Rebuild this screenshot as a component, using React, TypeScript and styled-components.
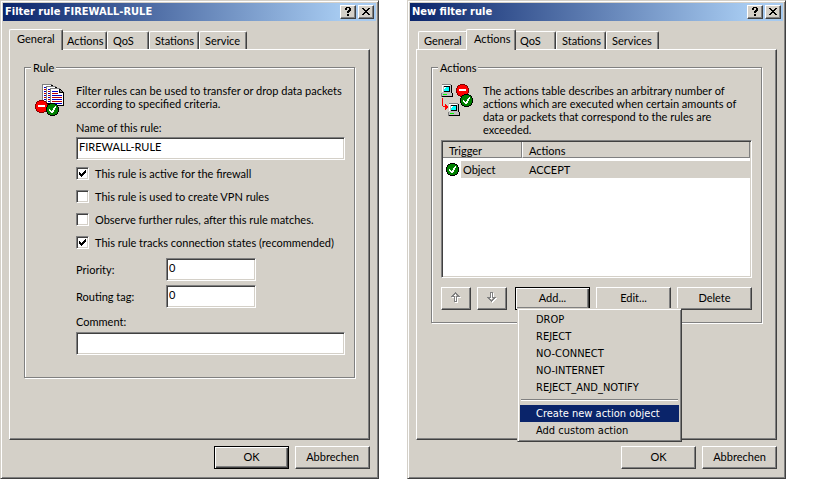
import React, { useId } from "react";
import styled, { createGlobalStyle, css } from "styled-components";

const face = "#d4d0c8";
const shadow = "#808080";
const dark = "#404040";
const uiFont = 'Lato, "Liberation Sans", Arial, sans-serif';
const menuFont = '"DejaVu Sans Condensed", Tahoma, sans-serif';

const GlobalStyle = createGlobalStyle`
  *, *::before, *::after { box-sizing: border-box; }
  body {
    margin: 0;
    background: #fff;
    color: #000;
    font: 11px/13px ${uiFont};
  }
  button, input { font: inherit; color: inherit; margin: 0; border-radius: 0; }
`;

const raised = css`
  border: 1px solid;
  border-color: #fff ${dark} ${dark} #fff;
  box-shadow: inset -1px -1px 0 ${shadow};
`;

const sunken = css`
  border: 1px solid;
  border-color: ${shadow} #fff #fff ${shadow};
  box-shadow: inset 1px 1px 0 ${dark}, inset -1px -1px 0 ${face};
`;

const Desktop = styled.main`
  display: grid;
  grid-template-columns: 1fr 1fr;
  column-gap: 28px;
  min-height: 100vh;
  padding-right: 45px;
`;

const Dialog = styled.section`
  display: flex;
  flex-direction: column;
  min-width: 0;
  padding: 2px;
  background: ${face};
  border: 1px solid;
  border-color: ${face} ${dark} ${dark} ${face};
  box-shadow: inset 1px 1px 0 #fff, inset -1px -1px 0 ${shadow};
`;

const TitleBar = styled.header`
  display: flex;
  align-items: center;
  gap: 2px;
  height: 18px;
  padding: 0 2px;
  background: linear-gradient(to right, #0a246a, #a6caf0 calc(100% - 36px));
`;

const Title = styled.h1`
  flex: 1;
  margin: 0;
  color: #fff;
  font: bold 11px/18px ${menuFont};
`;

const CaptionButton = styled.button`
  ${raised}
  display: grid;
  place-items: center;
  width: 16px;
  height: 14px;
  padding: 0 1px 1px 0;
  background: ${face};
`;

const Body = styled.div`
  display: flex;
  flex: 1;
  flex-direction: column;
  padding: 8px 6px 7px;
`;

const TabList = styled.div`
  display: flex;
  align-items: flex-end;
  height: 20px;
  padding: 0 2px;
`;

const Tab = styled.button<{ $width: number; $selected: boolean }>`
  ${raised}
  position: relative;
  width: ${(p) => p.$width}px;
  height: 18px;
  padding: 0 0 0 5px;
  background: ${face};
  border-bottom: 0;
  border-radius: 2px 2px 0 0;
  box-shadow: inset -1px 0 0 ${shadow};
  text-align: left;
  white-space: nowrap;
  ${(p) =>
    p.$selected &&
    css`
      z-index: 1;
      width: ${p.$width + 4}px;
      height: 21px;
      margin: 0 -2px -1px;
      padding: 0 0 3px 7px;
    `}
`;

const Panel = styled.div`
  ${raised}
  flex: 1;
  padding: 11px 14px 0;
`;

const Group = styled.fieldset`
  min-width: 0;
  margin: 0;
  padding: 10px 9px 0;
  border: 1px solid ${shadow};
  box-shadow: 1px 1px 0 #fff, inset 1px 1px 0 #fff;
`;

const Legend = styled.legend`
  padding: 0 2px;
  margin-left: -3px;
  background: ${face};
`;

const Intro = styled.div`
  display: grid;
  grid-template-columns: 32px 1fr;
  column-gap: 10px;
`;

const IntroText = styled.p`
  margin: 0;
`;

const Form = styled.div`
  display: flex;
  flex-direction: column;
  padding: 5px 0 22px 42px;
`;

const TextInput = styled.input`
  ${sunken}
  width: 100%;
  height: 23px;
  padding: 0 2px 4px;
  background: #fff;
`;

const FieldLabel = styled.label`
  margin-bottom: 3px;
`;

const Checks = styled.div`
  display: grid;
  row-gap: 10px;
  padding: 7px 0 9px;
`;

const CheckLabel = styled.label`
  display: flex;
  align-items: center;
  gap: 6px;
  white-space: nowrap;
`;

const CheckFrame = styled.span`
  display: grid;
  width: 13px;
  height: 13px;
  & > * { grid-area: 1 / 1; }
  input:not(:checked) + svg { display: none; }
`;

const CheckBox = styled.input`
  ${sunken}
  appearance: none;
  width: 13px;
  height: 13px;
  background: #fff;
`;

const ValueRow = styled.div`
  display: grid;
  grid-template-columns: 90px 90px;
  align-items: center;
  margin-bottom: 4px;
`;

const CommentField = styled.div`
  display: grid;
  row-gap: 4px;
  padding-top: 3px;
`;

const Footer = styled.footer`
  display: flex;
  justify-content: flex-end;
  gap: 6px;
  padding-top: 6px;
`;

const PushButton = styled.button<{ $default?: boolean }>`
  ${raised}
  flex: none;
  width: 75px;
  height: 23px;
  padding: 0 0 2px;
  background: ${face};
  ${(p) =>
    p.$default &&
    css`
      border-color: #000;
      box-shadow: inset 1px 1px 0 #fff, inset -1px -1px 0 ${dark}, inset -2px -2px 0 ${shadow};
    `}
`;

const ArrowButton = styled(PushButton)`
  display: grid;
  place-items: center;
  width: 30px;
`;

const ListBox = styled.div`
  ${sunken}
  height: 138px;
  margin-top: 4px;
  padding: 1px;
  background: #fff;
`;

const ListTable = styled.table`
  width: 100%;
  table-layout: fixed;
  border-collapse: separate;
  border-spacing: 0;
  tbody::before {
    content: "";
    display: block;
    height: 3px;
  }
`;

const HeadCell = styled.th<{ $first?: boolean }>`
  width: ${(p) => (p.$first ? "79px" : "auto")};
  height: 16px;
  padding: 2px 0 0 6px;
  border-right: 1px solid ${shadow};
  border-bottom: 1px solid ${shadow};
  border-left: ${(p) => (p.$first ? "0" : "1px solid #fff")};
  background: ${face};
  font-weight: normal;
  line-height: 13px;
  text-align: left;
`;

const Cell = styled.td`
  height: 17px;
  padding: 0;
`;

const CellContent = styled.div`
  display: flex;
  align-items: center;
`;

const CellText = styled.span<{ $indent: number }>`
  flex: 1;
  padding-left: ${(p) => p.$indent}px;
  background: ${face};
  line-height: 17px;
`;

const IconSlot = styled.span`
  display: flex;
  width: 18px;
  padding-left: 3px;
`;

const Actions = styled.div`
  display: flex;
  gap: 6px;
  padding: 9px 0 12px;
`;

const ArrowPair = styled.div`
  display: flex;
  flex: 1;
  gap: 6px;
`;

const MenuAnchor = styled.div`
  position: relative;
`;

const Menu = styled.div`
  position: absolute;
  z-index: 2;
  top: 21px;
  left: 2px;
  width: 165px;
  padding: 2px;
  background: ${face};
  border: 1px solid;
  border-color: ${face} ${dark} ${dark} ${face};
  box-shadow: inset 1px 1px 0 #fff, inset -1px -1px 0 ${shadow};
  font: 11px/17px ${menuFont};
`;

const MenuItem = styled.button<{ $active?: boolean }>`
  display: block;
  width: 100%;
  height: 17px;
  padding: 0 0 0 16px;
  border: 0;
  background: ${(p) => (p.$active ? "#0a246a" : "transparent")};
  color: ${(p) => (p.$active ? "#fff" : "#000")};
  text-align: left;
  white-space: nowrap;
`;

const MenuRule = styled.hr`
  margin: 3px 1px 4px;
  border: solid;
  border-width: 1px 0;
  border-color: ${shadow} transparent #fff;
`;

const Stop = ({ x, y }: { x: number; y: number }) => (
  <g transform={`translate(${x} ${y})`}>
    <path d="M4 0h5v1h2v1h1v2h1v5h-1v2h-1v1H9v1H4v-1H2v-1H1V9H0V4h1V2h1V1h2z" fill="#800000" />
    <path d="M4 1h5v1h2v2h1v5h-1v2H9v1H4v-1H2V9H1V4h1V2h2z" fill="#f00" />
    <path d="M3 5h7v2H3z" fill="#fff" />
  </g>
);

const Pass = ({ x = 0, y = 0 }: { x?: number; y?: number }) => (
  <g transform={`translate(${x} ${y})`}>
    <path d="M4 0h5v1h2v1h1v2h1v5h-1v2h-1v1H9v1H4v-1H2v-1H1V9H0V4h1V2h1V1h2z" fill="#000" />
    <path d="M4 1h5v1h2v2h1v5h-1v2H9v1H4v-1H2V9H1V4h1V2h2z" fill="#008000" />
    <path d="M9 3h1v2H9v2H8v2H7v1H5V9H4V8H3V6h1v1h1v1h1V7h1V5h1V4h1z" fill="#fff" />
  </g>
);

const Sheet = ({ x, y }: { x: number; y: number }) => (
  <g transform={`translate(${x} ${y})`}>
    <path d="M0 0h10v1h1v1h1v1h1v1h1v14H0z" fill="#808080" />
    <path d="M1 1h8v4h4v12H1z" fill="#fff" />
    <path d="M10 1h1v1h1v1h1v1h1v14H1v-1h12V5H9V1h1v3h2V3h-1V2h-1z" fill="#000" />
    <path d="M2 3h6v1H2zM2 7h10v1H2zM2 11h10v1H2zM2 15h10v1H2z" fill="#0000c0" />
    <path d="M2 5h6v1H2zM2 9h10v1H2zM2 13h10v1H2z" fill="#c00000" />
  </g>
);

const Computer = ({ x, y }: { x: number; y: number }) => (
  <g transform={`translate(${x} ${y})`}>
    <path d="M1 0h9v1h1v8h1v4H0V9h1V1z" fill="#808080" />
    <path d="M1 1h9v8H1z" fill="#c0c0c0" />
    <path d="M1 1h8v1H2v6H1z" fill="#fff" />
    <path d="M3 2h6v6H3z" fill="#000" />
    <path d="M3 3h5v4H3z" fill="#0ff" />
    <path d="M3 3h2v1H4v1H3z" fill="#fff" />
    <path d="M10 1h1v8h-1zM1 12h11v1H1zM11 9h1v3h-1z" fill="#000" />
    <path d="M1 9h10v3H1z" fill="#c0c0c0" />
    <path d="M2 10h4v1H2z" fill="#0f0" />
  </g>
);

const RuleIcon = () => (
  <svg width="32" height="32" shapeRendering="crispEdges" aria-hidden="true">
    <Sheet x={8} y={0} />
    <Sheet x={12} y={2} />
    <Sheet x={16} y={4} />
    <Stop x={1} y={16} />
    <Pass x={12} y={19} />
  </svg>
);

const ActionsIcon = () => (
  <svg width="32" height="32" shapeRendering="crispEdges" aria-hidden="true">
    <Computer x={0} y={0} />
    <Computer x={7} y={19} />
    <path d="M1 14h1v8h2v-2h1v1h1v1h1v2H6v1H5v1H4v-3H2v-1H1z" fill="#f00" />
    <Stop x={15} y={0} />
    <Pass x={19} y={10} />
  </svg>
);

const PassIcon = () => (
  <svg width="13" height="13" shapeRendering="crispEdges" aria-hidden="true">
    <Pass />
  </svg>
);

const Tick = () => (
  <svg width="13" height="13" shapeRendering="crispEdges" pointerEvents="none" aria-hidden="true">
    <path d="M3 5h1v1h1v1h1V6h1V5h1V4h1V3h1v3H9v1H8v1H7v1H6v1H5V9H4V8H3z" fill="#000" />
  </svg>
);

const ArrowGlyph = ({ down }: { down?: boolean }) => {
  const d = "M4 0h1v1h1v1h1v1h1v1h1v1H6v5H3V5H0V4h1V3h1V2h1V1h1zM4 2v1H3v1h1v5h1V4h1V3H5V2z";
  const flip = down ? "translate(0 10) scale(1 -1)" : undefined;
  return (
    <svg width="10" height="11" shapeRendering="crispEdges" fillRule="evenodd" aria-hidden="true">
      <g transform="translate(1 1)">
        <path d={d} transform={flip} fill="#fff" />
      </g>
      <path d={d} transform={flip} fill={shadow} />
    </svg>
  );
};

const HelpGlyph = () => (
  <svg width="8" height="9" shapeRendering="crispEdges" aria-hidden="true">
    <path d="M2 0h4v1h1v3H6v1H5v1H3V4h1V3h1V1H3v2H1V1h1zM3 7h2v2H3z" />
  </svg>
);

const CloseGlyph = () => (
  <svg width="8" height="7" shapeRendering="crispEdges" aria-hidden="true">
    <path d="M0 0h2v1h1v1h2V1h1V0h2v1H7v1H6v1H5v1h1v1h1v1h1v1H6V6H5V5H3v1H2v1H0V6h1V5h1V4h1V3H2V2H1V1H0z" />
  </svg>
);

type TabSpec = [label: string, width: number];

interface FrameProps {
  title: string;
  tabs: TabSpec[];
  selected: string;
  okDefault?: boolean;
  children: React.ReactNode;
}

function DialogFrame({ title, tabs, selected, okDefault, children }: FrameProps) {
  return (
    <Dialog role="dialog" aria-label={title}>
      <TitleBar>
        <Title>{title}</Title>
        <CaptionButton aria-label="Help"><HelpGlyph /></CaptionButton>
        <CaptionButton aria-label="Close"><CloseGlyph /></CaptionButton>
      </TitleBar>
      <Body>
        <TabList role="tablist">
          {tabs.map(([label, width]) => (
            <Tab
              key={label}
              role="tab"
              aria-selected={label === selected}
              $selected={label === selected}
              $width={width}
            >
              {label}
            </Tab>
          ))}
        </TabList>
        <Panel role="tabpanel">{children}</Panel>
        <Footer>
          <PushButton $default={okDefault}>OK</PushButton>
          <PushButton>Abbrechen</PushButton>
        </Footer>
      </Body>
    </Dialog>
  );
}

function Check({ label, checked }: { label: string; checked?: boolean }) {
  return (
    <CheckLabel>
      <CheckFrame>
        <CheckBox type="checkbox" defaultChecked={checked} />
        <Tick />
      </CheckFrame>
      {label}
    </CheckLabel>
  );
}

function ValueField({ label }: { label: string }) {
  const id = useId();
  return (
    <ValueRow>
      <label htmlFor={id}>{label}</label>
      <TextInput id={id} defaultValue="0" />
    </ValueRow>
  );
}

const sharedTabs: TabSpec[] = [["General", 50], ["Actions", 46], ["QoS", 42], ["Stations", 50]];
const ruleTabs: TabSpec[] = [...sharedTabs, ["Service", 48]];
const newRuleTabs: TabSpec[] = [...sharedTabs, ["Services", 53]];
const actionObjects = ["DROP", "REJECT", "NO-CONNECT", "NO-INTERNET", "REJECT_AND_NOTIFY"];

export default function App() {
  return (
    <>
      <GlobalStyle />
      <Desktop>
        <DialogFrame title="Filter rule FIREWALL-RULE" tabs={ruleTabs} selected="General" okDefault>
          <Group>
            <Legend>Rule</Legend>
            <Intro>
              <RuleIcon />
              <IntroText>
                Filter rules can be used to transfer or drop data packets according to specified criteria.
              </IntroText>
            </Intro>
            <Form>
              <FieldLabel htmlFor="rule-name">Name of this rule:</FieldLabel>
              <TextInput id="rule-name" defaultValue="FIREWALL-RULE" />
              <Checks>
                <Check label="This rule is active for the firewall" checked />
                <Check label="This rule is used to create VPN rules" />
                <Check label="Observe further rules, after this rule matches." />
                <Check label="This rule tracks connection states (recommended)" checked />
              </Checks>
              <ValueField label="Priority:" />
              <ValueField label="Routing tag:" />
              <CommentField>
                <label htmlFor="rule-comment">Comment:</label>
                <TextInput id="rule-comment" />
              </CommentField>
            </Form>
          </Group>
        </DialogFrame>

        <DialogFrame title="New filter rule" tabs={newRuleTabs} selected="Actions">
          <Group>
            <Legend>Actions</Legend>
            <Intro>
              <ActionsIcon />
              <IntroText>
                The actions table describes an arbitrary number of actions which are executed when certain
                amounts of data or packets that correspond to the rules are exceeded.
              </IntroText>
            </Intro>
            <ListBox>
              <ListTable>
                <thead>
                  <tr>
                    <HeadCell $first>Trigger</HeadCell>
                    <HeadCell>Actions</HeadCell>
                  </tr>
                </thead>
                <tbody>
                  <tr>
                    <Cell>
                      <CellContent>
                        <IconSlot><PassIcon /></IconSlot>
                        <CellText $indent={2}>Object</CellText>
                      </CellContent>
                    </Cell>
                    <Cell>
                      <CellContent>
                        <CellText $indent={7}>ACCEPT</CellText>
                      </CellContent>
                    </Cell>
                  </tr>
                </tbody>
              </ListTable>
            </ListBox>
            <Actions>
              <ArrowPair>
                <ArrowButton aria-label="Move up" disabled><ArrowGlyph /></ArrowButton>
                <ArrowButton aria-label="Move down" disabled><ArrowGlyph down /></ArrowButton>
              </ArrowPair>
              <MenuAnchor>
                <PushButton $default aria-haspopup="menu" aria-expanded="true">Add...</PushButton>
                <Menu role="menu">
                  {actionObjects.map((name) => (
                    <MenuItem key={name} role="menuitem">{name}</MenuItem>
                  ))}
                  <MenuRule />
                  <MenuItem role="menuitem" $active>Create new action object</MenuItem>
                  <MenuItem role="menuitem">Add custom action</MenuItem>
                </Menu>
              </MenuAnchor>
              <PushButton>Edit...</PushButton>
              <PushButton>Delete</PushButton>
            </Actions>
          </Group>
        </DialogFrame>
      </Desktop>
    </>
  );
}
